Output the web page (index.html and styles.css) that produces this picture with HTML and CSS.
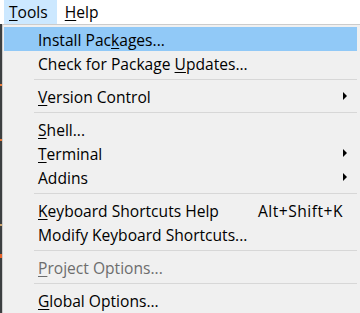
FILE: index.html
```html
<!DOCTYPE html>
<html>
<head>
<meta charset="utf-8">
<link rel="stylesheet" href="styles.css">
</head>
<body>
<div class="menubar">
  <div class="mb-item active"><u>T</u>ools</div>
  <div class="mb-item"><u>H</u>elp</div>
</div>
<div class="dropdown">
  <div class="strip"></div>
  <div class="menu">
    <div class="item hover"><span class="label">Install Pac<u>k</u>ages...</span></div>
    <div class="item"><span class="label">Check for Package <u>U</u>pdates...</span></div>
    <div class="sep"></div>
    <div class="item"><span class="label"><u>V</u>ersion Control</span><span class="arrow"></span></div>
    <div class="sep"></div>
    <div class="item"><span class="label"><u>S</u>hell...</span></div>
    <div class="item"><span class="label"><u>T</u>erminal</span><span class="arrow"></span></div>
    <div class="item"><span class="label">Addins</span><span class="arrow"></span></div>
    <div class="sep"></div>
    <div class="item"><span class="label"><u>K</u>eyboard Shortcuts Help</span><span class="shortcut">Alt+Shift+K</span></div>
    <div class="item"><span class="label">Modify Keyboard Shortcuts...</span></div>
    <div class="sep"></div>
    <div class="item disabled"><span class="label"><u>P</u>roject Options...</span></div>
    <div class="sep"></div>
    <div class="item"><span class="label"><u>G</u>lobal Options...</span></div>
  </div>
</div>
</body>
</html>
```
FILE: styles.css
```css
html, body {
  margin: 0;
  padding: 0;
  background: #ffffff;
  font-family: "Open Sans", "Liberation Sans", Arial, sans-serif;
  font-size: 15.6px;
  color: #000000;
  overflow: hidden;
}

u {
  text-decoration: underline;
  text-decoration-thickness: 1px;
  text-underline-offset: 2px;
}

.menubar {
  display: flex;
  height: 24px;
  padding-left: 4px;
  align-items: stretch;
}

.mb-item {
  display: flex;
  align-items: center;
  padding: 0 8px 1px 8px;
  height: 23px;
}

.mb-item.active {
  background: #cce8ff;
  padding-left: 5px;
  padding-right: 9px;
}

.dropdown {
  display: flex;
  height: 289px;
}

.strip {
  width: 2px;
  background: linear-gradient(to bottom,
    #3c3f41 0px, #3c3f41 60px, #e87a3a 60px, #e87a3a 62px,
    #3c3f41 62px, #3c3f41 115px, #e87a3a 115px, #e87a3a 117px,
    #3c3f41 117px, #3c3f41 200px, #c9a06a 200px, #c9a06a 202px,
    #3c3f41 202px, #3c3f41 230px, #e8632a 230px, #e8632a 234px,
    #3c3f41 234px);
}

.menu {
  flex: 1;
  background: #f0f0f0;
  border-top: 1px solid #cccccc;
  border-left: 1px solid #cccccc;
  padding: 2px 3px 0 1px;
}

.item {
  display: flex;
  align-items: center;
  box-sizing: border-box;
  height: 24px;
  padding-top: 1px;
  padding-left: 34px;
  padding-right: 10px;
}

.item.hover {
  background: #91c9f7;
}

.item.disabled {
  color: #6d6d6d;
}

.label {
  flex: 1;
  white-space: nowrap;
}

.shortcut {
  white-space: nowrap;
  letter-spacing: 0.5px;
  margin-right: 4px;
}

.arrow {
  width: 0;
  height: 0;
  margin-top: -1px;
  border-top: 4px solid transparent;
  border-bottom: 4px solid transparent;
  border-left: 4px solid #000000;
}

.sep {
  height: 1px;
  margin: 4px 0 4px 30px;
  background: #d7d7d7;
}
```
